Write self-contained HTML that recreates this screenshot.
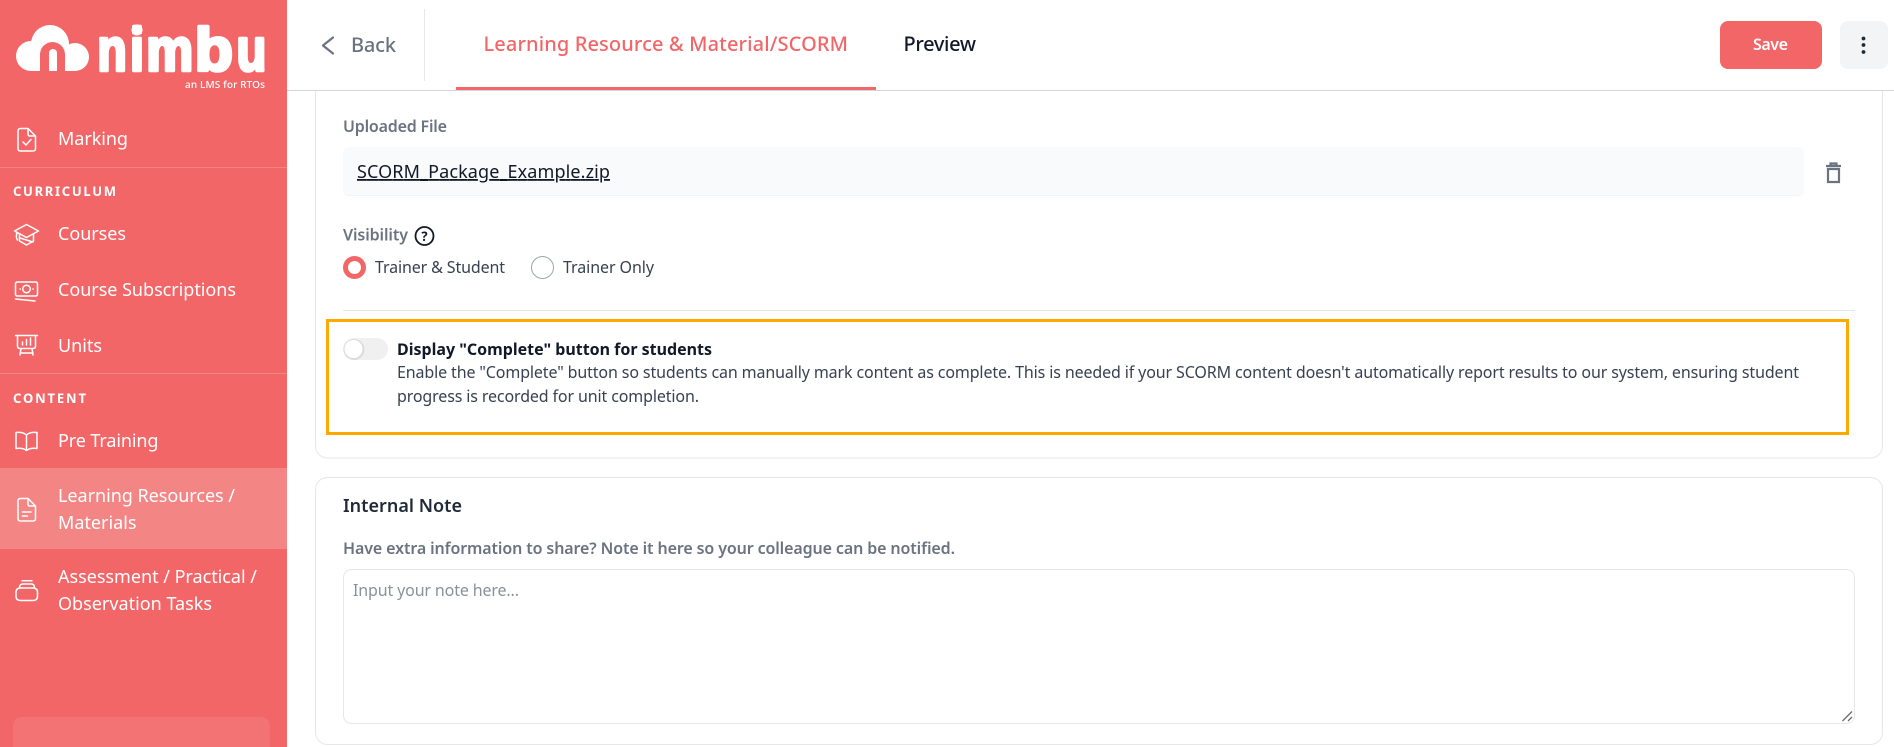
<!DOCTYPE html>
<html lang="en"><head><meta charset="utf-8"><title>Learning Resource</title>
<style>
html,body{margin:0;padding:0;background:#fff;width:1894px;height:747px;overflow:hidden}
svg{display:block}
text{font-family:"Noto Sans","Liberation Sans",sans-serif;white-space:pre}
.s{fill:#fff;font-size:18px}
.h{fill:#fff;font-size:13px;font-weight:700}
.i{fill:none;stroke:#fff;stroke-width:1.5;stroke-linejoin:round;stroke-linecap:round}
.g{fill:#6b7280;font-size:16px;font-weight:600}
.d{fill:#374151;font-size:16px}
.l{font-family:"Liberation Sans",sans-serif;font-size:60px;font-weight:700;fill:#fff;stroke:#fff;stroke-width:3.6px;stroke-linejoin:round}
</style></head><body>
<svg xmlns="http://www.w3.org/2000/svg" width="1894" height="747" viewBox="0 0 1894 747">
<rect width="1894" height="747" fill="#fff"/>
<!-- cards -->
<rect x="315.5" y="60" width="1567" height="398" rx="12" fill="#fff" stroke="#e5e7eb"/>
<rect x="315.5" y="477.5" width="1567" height="267" rx="12" fill="#fff" stroke="#e5e7eb"/>
<!-- header -->
<rect x="287" y="0" width="1607" height="90" fill="#fff"/>
<rect x="287" y="90" width="1607" height="1" fill="#d5d5dd"/>
<rect x="424" y="9" width="1" height="72" fill="#e5e7eb"/>
<path d="M333 37.5 L323 45.5 L333 53.5" fill="none" stroke="#6b7280" stroke-width="2.2" stroke-linecap="round" stroke-linejoin="round"/>
<text x="351" y="52" font-size="20" font-weight="500" fill="#6b7280" textLength="45">Back</text>
<text x="483.5" y="51" font-size="20" font-weight="500" fill="#f26668" textLength="364.500">Learning Resource &amp; Material/SCORM</text>
<text x="903.5" y="51" font-size="20" font-weight="500" fill="#111827" textLength="72.5">Preview</text>
<rect x="456" y="87" width="420" height="3" fill="#f26668"/>
<rect x="1720" y="21" width="102" height="48" rx="8" fill="#f26668"/>
<text x="1753" y="50" font-size="16" font-weight="600" fill="#fff" textLength="35">Save</text>
<rect x="1840" y="21" width="48" height="48" rx="8" fill="#f3f4f6"/>
<circle cx="1863.5" cy="38.5" r="1.9" fill="#1f2937"/><circle cx="1863.5" cy="45" r="1.9" fill="#1f2937"/><circle cx="1863.5" cy="52" r="1.9" fill="#1f2937"/>
<!-- sidebar -->
<rect width="287" height="747" fill="#f26668"/>
<!-- logo cloud -->
<circle cx="31" cy="56" r="15" fill="#fff"/>
<circle cx="50" cy="44" r="19" fill="#fff"/>
<circle cx="75" cy="57" r="14" fill="#fff"/>
<rect x="31" y="48" width="44" height="23" fill="#fff"/>
<path d="M40 71 V54.500 A12.500 12.500 0 0 1 65 54.500 V71 Z" fill="#f26668"/>
<path d="M49 71 V53 A4 4 0 0 1 57 53 V71 Z" fill="#fff"/>
<!-- logo word -->
<text class="l" transform="translate(97.4 70.500) scale(.8 1)">n</text>
<text class="l" transform="translate(130 70.500) scale(.84 1)">i</text>
<circle cx="137" cy="30" r="5.500" fill="#fff"/>
<text class="l" transform="translate(146.2 70.500) scale(.88 1)">m</text>
<text class="l" transform="translate(194.8 70.500) scale(1.04 1)">b</text>
<text class="l" transform="translate(236.6 70.500) scale(.81 1)">u</text>
<text x="185" y="88" font-size="10" font-weight="500" fill="#fff" textLength="80">an LMS for RTOs</text>

<path class="i" d="M18 131 Q18 128.500 20.500 128.500 H28 L35.500 136 V148.500 Q35.500 151 33 151 H20.500 Q18 151 18 148.500 Z M28 128.500 V134 Q28 136 30 136 H35.500 M23 142 L26 145 L31 139.500"/>
<text class="s" x="58" y="145" textLength="70">Marking</text>
<rect y="167" width="287" height="1" fill="#f68286"/>
<text class="h" x="13" y="196" textLength="103">CURRICULUM</text>
<path class="i" d="M26.500 224.500 L38.500 231 L26.500 237.500 L14.500 231 Z M19.500 234 V241 L26.500 245 L33.500 241 V234 M17 232.500 C16 236 16 238 17.500 240 M20 238 L33 242"/>
<text class="s" x="58" y="240" textLength="68">Courses</text>
<path class="i" d="M17.500 282 H35.500 Q37.500 282 37.500 284 V294 Q37.500 296 35.500 296 H17.500 Q15.500 296 15.500 294 V284 Q15.500 282 17.500 282 Z M15.500 299 L35 301"/>
<circle class="i" cx="26.500" cy="289" r="3.800"/>
<path class="i" d="M20 289 h.3 M33 289 h.3"/>
<text class="s" x="58" y="296" textLength="178">Course Subscriptions</text>
<path class="i" d="M15.500 335.500 H37.500 M17.500 335.500 V346 Q17.500 348.500 20 348.500 H33 Q35.500 348.500 35.500 346 V335.500 M22.500 345 V342 M26.500 345 V339.500 M30.500 345 V338 M21 348.500 L20 355 M32 348.500 L33 355 M20 353 H33"/>
<text class="s" x="58" y="352" textLength="44">Units</text>
<rect y="373" width="287" height="1" fill="#f68286"/>
<text class="h" x="13" y="403" textLength="73">CONTENT</text>
<path class="i" d="M26.500 435 C24 432.500 20 432 16 432.500 V448.500 C20 448 24 448.500 26.500 450.500 C29 448.500 33 448 37 448.500 V432.500 C33 432 29 432.500 26.500 435 Z M26.500 435 V450.500"/>
<text class="s" x="58" y="447" textLength="100.500">Pre Training</text>

<rect y="468" width="287" height="81" fill="#f48585"/>
<path class="i" d="M18 501 Q18 498.500 20.500 498.500 H28 L35.500 506 V518.500 Q35.500 521 33 521 H20.500 Q18 521 18 518.500 Z M28 498.500 V504 Q28 506 30 506 H35.500 M22.500 512 H31 M22.500 516 H27.500"/>
<text class="s" x="58" y="502" textLength="177">Learning Resources /</text>
<text class="s" x="58" y="529" textLength="78.500">Materials</text>
<path class="i" d="M19.500 587.500 Q19.500 584 23 584 H31 Q34.500 584 34.500 587.500 M22 580.800 H32 M16 592.500 Q16 588 20.500 588 H33 Q37.500 588 37.500 592.500 V596 Q37.500 600.500 33 600.500 H20.500 Q16 600.500 16 596 Z"/>
<text class="s" x="58" y="583" textLength="199">Assessment / Practical /</text>
<text class="s" x="58" y="610" textLength="154">Observation Tasks</text>
<path d="M13 747 V727 Q13 717 23 717 H260 Q270 717 270 727 V747 Z" fill="#f37375"/>

<!-- Uploaded file -->
<text class="g" x="343" y="132" textLength="104">Uploaded File</text>
<rect x="343" y="148" width="1461" height="48" rx="6" fill="#e9ebee" opacity=".6"/>
<rect x="343" y="147" width="1461" height="48" rx="6" fill="#f9fafb"/>
<text x="357" y="178" font-size="18" fill="#111827" text-decoration="underline" textLength="253">SCORM_Package_Example.zip</text>
<path d="M1826 166 H1841 M1830.500 165 V163.500 H1836.500 V165 M1828 169 H1839 V182 H1828 Z" fill="none" stroke="#6b7280" stroke-width="2.2"/>
<text class="g" x="343" y="240.500" textLength="65">Visibility</text>
<circle cx="424.500" cy="236" r="9" fill="none" stroke="#111827" stroke-width="1.800"/>
<text x="424.500" y="241" font-size="13" font-weight="700" fill="#111827" text-anchor="middle">?</text>
<circle cx="354.500" cy="267.500" r="9" fill="#fff" stroke="#f26668" stroke-width="5"/>
<text class="d" x="375" y="273" textLength="130">Trainer &amp; Student</text>
<circle cx="542.500" cy="267.500" r="11" fill="#fff" stroke="#9ca3af" stroke-width="1"/>
<text class="d" x="563" y="273" textLength="91">Trainer Only</text>
<rect x="343" y="310" width="1512" height="1" fill="#e5e7eb"/>
<!-- highlight -->
<rect x="327.500" y="320.500" width="1520" height="113" fill="none" stroke="#ffa800" stroke-width="3"/>
<rect x="343" y="338" width="45" height="22" rx="11" fill="#f0f0f1"/>
<circle cx="354" cy="349.500" r="10.500" fill="#b5b5b5" opacity=".35"/>
<circle cx="353.500" cy="349" r="9" fill="#fff"/>
<text x="397" y="355" font-size="16" font-weight="700" fill="#111827" textLength="315">Display "Complete" button for students</text>
<text class="d" x="397" y="378" textLength="1402">Enable the "Complete" button so students can manually mark content as complete. This is needed if your SCORM content doesn't automatically report results to our system, ensuring student</text>
<text class="d" x="397" y="402" textLength="302">progress is recorded for unit completion.</text>
<!-- note -->
<text x="343" y="512" font-size="18" font-weight="600" fill="#1f2937" textLength="119">Internal Note</text>
<text class="g" x="343" y="554" textLength="612">Have extra information to share? Note it here so your colleague can be notified.</text>
<rect x="343.500" y="569.500" width="1511" height="154" rx="8" fill="#fff" stroke="#e5e7eb"/>
<text x="353" y="596" font-size="16" fill="#8b909a" textLength="166">Input your note here...</text>
<path d="M1842.500 721 L1852 711.500 M1848 721 L1852 717" stroke="#6b6b6b" stroke-width="1.300" fill="none"/>
</svg>
</body></html>
